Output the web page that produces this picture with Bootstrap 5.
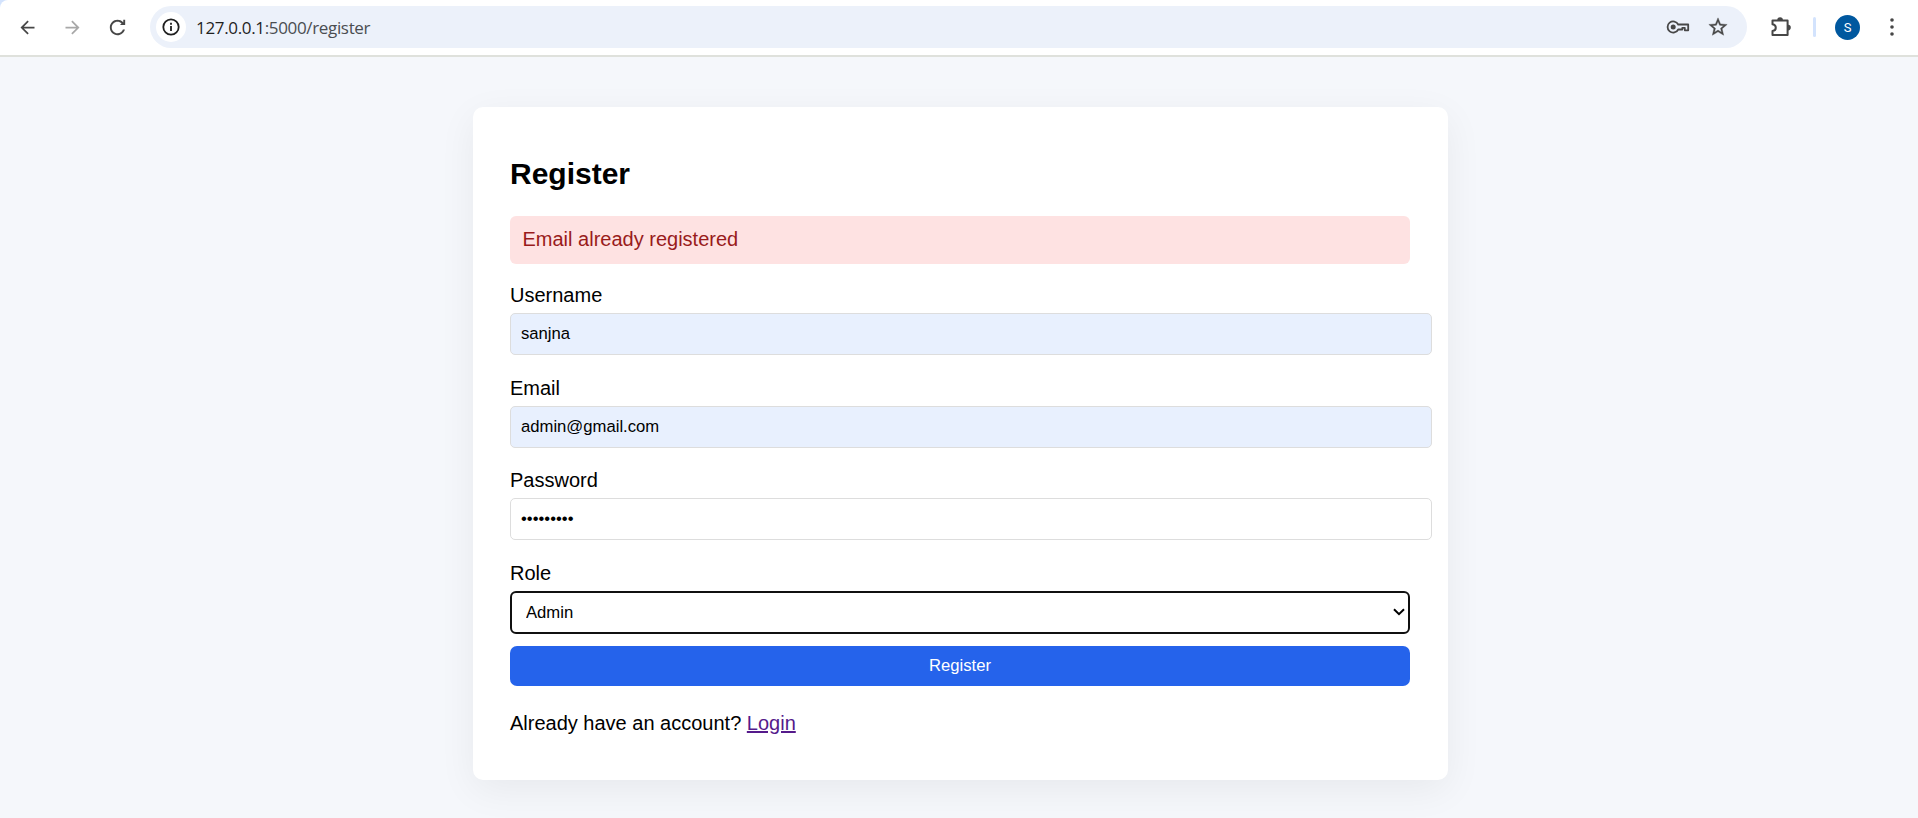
<!DOCTYPE html>
<html lang="en">
<head>
<meta charset="utf-8">
<title>Register</title>
<link rel="stylesheet" href="https://cdn.jsdelivr.net/npm/bootstrap@5.3.0/dist/css/bootstrap.min.css">
<style>
  body { font: 20px/24px "Liberation Sans", Arial, sans-serif; color: #000; background: #f5f7fb; height: 818px; overflow: hidden; }
  .browser-bar { height: 57px; padding: 6px 16px 7px 17px; background: #fff; border-bottom: 2px solid #dfe1dc; border-top-left-radius: 8px; }
  .bar-wrap { background: #d3e3fd; }
  .browser-bar svg { display: block; flex: none; }
  .address { height: 42px; margin-left: 21px; padding: 0 18px 0 6px; border-radius: 21px; background: #ecf1fa; }
  .site-info { width: 30px; height: 30px; background: #fff; }
  .url { font: 17px/24px "Open Sans", "Noto Sans", sans-serif; margin: 1px 0 0 10px; color: #4a4d51; letter-spacing: -.34px; white-space: nowrap; }
  .url span { color: #1f1f1f; }
  .bar-rule { width: 3px; height: 20px; background: #d3e3fd; border-radius: 2px; margin: 0 19px 0 21px; }
  .avatar { width: 25px; height: 25px; background: #00589f; color: #fff; font: 13px/25px Roboto, sans-serif; margin-right: 22px; }
  .panel { width: 975px; height: 673px; margin: 50px 0 0 473px; padding: 49px 38px 0 37px; border: 0; border-radius: 10px; box-shadow: 0 10px 38px rgba(0,0,0,.06); }
  h2 { font-size: 30px; line-height: 36px; font-weight: 700; margin: 0 0 24px; }
  .notice { height: 48px; padding: 11px 12.5px; margin: 0 0 19px; border: 0; border-radius: 6px; background: #fee2e2; color: #991b1b; }
  .field { height: 92.5px; }
  .field label { display: block; height: 30px; }
  .field .form-control { width: 922px; height: 42px; padding: 0 10px; font-size: 16.67px; line-height: 24px; color: #000; border: 1px solid #ddd; border-radius: 5px; }
  .field .filled { background: #e8f0fe; }
  .field .form-select { height: 43px; padding: 0 14px; font-size: 16.67px; color: #000; border: 2px solid #101010; border-radius: 6px;
    background-image: url("data:image/svg+xml,%3Csvg xmlns='http://www.w3.org/2000/svg' viewBox='0 0 12 8'%3E%3Cpath d='M1 1.2l5 5 5-5' fill='none' stroke='%23000' stroke-width='2'/%3E%3C/svg%3E");
    background-size: 12px 8px; background-position: right 3px center; }
  .submit { height: 40px; margin-top: -7px; padding: 0 0 1px; border: 0; border-radius: 7px; background: #2563eb; color: #fff; font-size: 16.67px; }
  .signin { margin: 25px 0 0; }
  .signin a { color: #551a8b; }
</style>
<script src="https://cdn.jsdelivr.net/npm/bootstrap@5.3.0/dist/js/bootstrap.bundle.min.js"></script>
</head>
<body>
<div class="bar-wrap">
<header class="browser-bar d-flex align-items-center">
  <svg width="21" height="21" viewBox="0 0 24 24" fill="#474747"><path d="M20 11H7.83l5.59-5.59L12 4l-8 8 8 8 1.41-1.41L7.83 13H20z"/></svg>
  <svg width="21" height="21" viewBox="0 0 24 24" fill="#a8a8a8" style="margin-left:24px"><path d="M12 4l-1.41 1.41L16.17 11H4v2h12.17l-5.58 5.59L12 20l8-8z"/></svg>
  <svg width="23" height="23" viewBox="0 0 24 24" fill="#474747" style="margin-left:23px"><path d="M17.65 6.35C16.2 4.9 14.21 4 12 4c-4.42 0-7.99 3.58-7.99 8s3.57 8 7.99 8c3.73 0 6.84-2.55 7.73-6h-2.08c-.82 2.33-3.04 4-5.65 4-3.31 0-6-2.69-6-6s2.69-6 6-6c1.66 0 3.14.69 4.22 1.78L14.5 9.5H20V4h-2v2.7z"/></svg>
  <div class="address d-flex align-items-center flex-grow-1">
    <span class="site-info rounded-circle d-flex align-items-center justify-content-center">
      <svg width="18" height="18" viewBox="0 0 18 18"><circle cx="9" cy="9" r="7.7" fill="none" stroke="#1f1f1f" stroke-width="1.8"/><path d="M9 8v5M9 4.8v1.9" stroke="#1f1f1f" stroke-width="1.8"/></svg>
    </span>
    <span class="url"><span>127.0.0.1</span>:5000/register</span>
    <svg class="ms-auto" width="24" height="16" viewBox="0 0 24 16"><path d="M12.2 5.5H22.2V11.3H18.8V8.8H16.3V10.5H12.2A5.6 5.6 0 1 1 12.2 5.5Z" fill="none" stroke="#474747" stroke-width="1.8" stroke-linejoin="round"/><circle cx="7.2" cy="8" r="2.5" fill="#474747"/></svg>
    <svg width="22" height="22" viewBox="0 0 24 24" style="margin-left:17px" fill="#474747" stroke="#474747" stroke-width=".4"><path d="M22 9.24l-7.19-.62L12 2 9.19 8.63 2 9.24l5.46 4.73L5.82 21 12 17.27 18.18 21l-1.63-7.03L22 9.24zM12 15.4l-3.76 2.27 1-4.28-3.32-2.88 4.38-.38L12 6.1l1.71 4.04 4.38.38-3.32 2.88 1 4.28L12 15.4z"/></svg>
  </div>
  <svg width="22" height="22" viewBox="0 0 22 22" style="margin-left:23px"><path d="M2.5 4.4H17.6V19H2.5V15.1Q5.8 14.5 5.8 11.7T2.5 8.3Z" fill="none" stroke="#474747" stroke-width="2" stroke-linejoin="round"/><path d="M7.3 4a2.8 2.8 0 0 1 5.6 0zM18 8.8a2.8 2.8 0 0 1 0 5.6z" fill="#474747"/></svg>
  <span class="bar-rule"></span>
  <span class="avatar rounded-circle text-center">S</span>
  <svg width="20" height="20" viewBox="0 0 20 20" fill="#474747"><circle cx="10" cy="3" r="1.8"/><circle cx="10" cy="10" r="1.8"/><circle cx="10" cy="17" r="1.8"/></svg>
</header>
</div>
<main>
  <section class="card panel">
    <h2>Register</h2>
    <div class="alert notice">Email already registered</div>
    <form>
      <div class="field"><label for="user">Username</label><input id="user" class="form-control filled" value="sanjna"></div>
      <div class="field"><label for="mail">Email</label><input id="mail" class="form-control filled" value="admin@gmail.com"></div>
      <div class="field"><label for="pass">Password</label><input id="pass" type="password" class="form-control" value="123456789"></div>
      <div class="field"><label for="role">Role</label><select id="role" class="form-select"><option>Admin</option></select></div>
      <button type="button" class="btn submit w-100 d-block">Register</button>
    </form>
    <p class="signin">Already have an account? <a href="#">Login</a></p>
  </section>
</main>
</body>
</html>
